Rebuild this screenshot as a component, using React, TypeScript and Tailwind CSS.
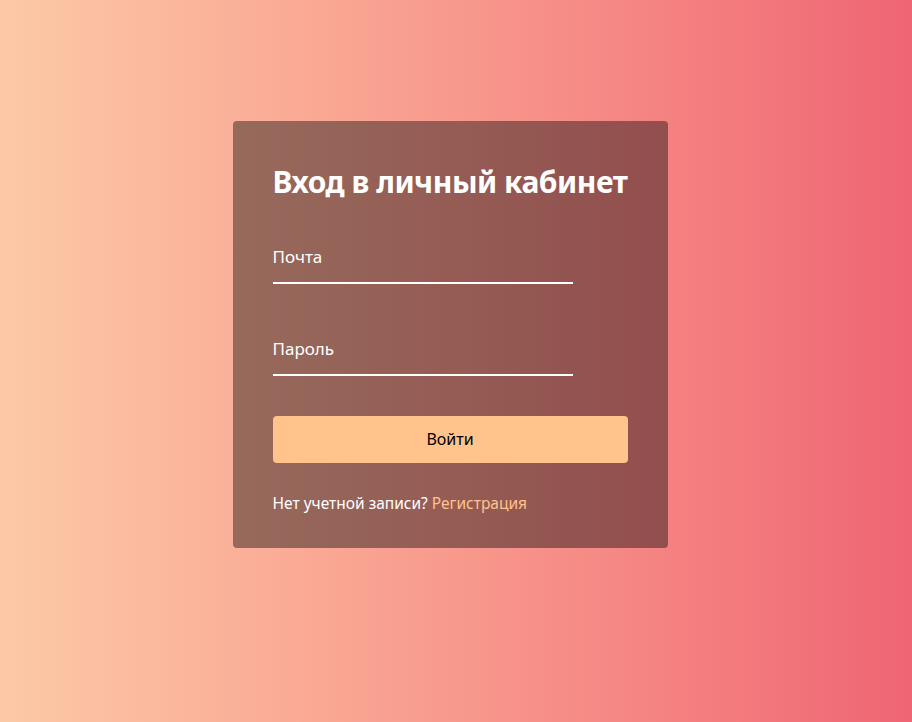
export default function App() {
  return (
    <div
      className="min-h-screen w-full flex items-center justify-center bg-gradient-to-r from-[#fcc9a6] to-[#ef6574]"
      style={{ fontFamily: '"Noto Sans", "Open Sans", sans-serif' }}
    >
      <form
        className="w-[435px] -mt-[54px] mr-[12px] bg-black/40 rounded-[4px] px-10 pt-[41px] pb-[34px] text-white"
        onSubmit={(e) => e.preventDefault()}
      >
        <h1 className="text-[30px] font-bold leading-[40px] tracking-[-0.5px]">Вход в личный кабинет</h1>

        <div className="mt-[43px] w-[300px]">
          <input
            type="email"
            placeholder="Почта"
            className="w-full bg-transparent border-b-2 border-white pb-[13px] text-[17px] leading-[24px] text-white placeholder:text-white outline-none"
          />
        </div>

        <div className="mt-[53px] w-[300px]">
          <input
            type="password"
            placeholder="Пароль"
            className="w-full bg-transparent border-b-2 border-white pb-[13px] text-[17px] leading-[24px] text-white placeholder:text-white outline-none"
          />
        </div>

        <button
          type="submit"
          className="mt-[40px] w-full h-[47px] rounded-[4px] bg-[#ffc38b] text-black text-[16px]"
        >
          Войти
        </button>

        <p className="mt-[29px] text-[15.5px] leading-[22px]">
          Нет учетной записи? <a href="#" className="text-[#ffc38b]">Регистрация</a>
        </p>
      </form>
    </div>
  )
}
